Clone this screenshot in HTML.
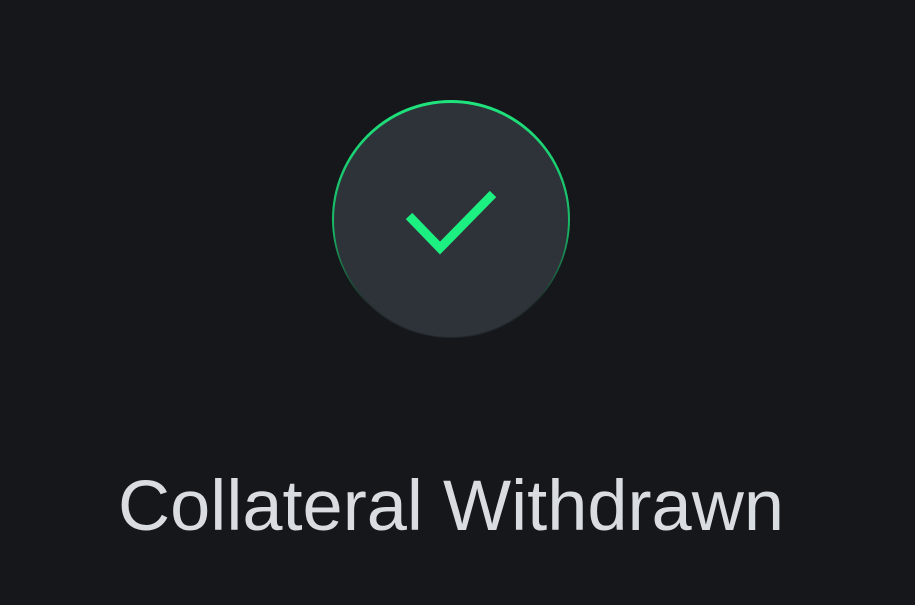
<!DOCTYPE html>
<html><head><style>
html,body{margin:0;padding:0;background:#15171b;width:915px;height:605px;overflow:hidden}
</style></head><body>
<svg width="915" height="605" viewBox="0 0 915 605" xmlns="http://www.w3.org/2000/svg">
<defs>
<linearGradient id="g" x1="0" y1="0" x2="0" y2="1">
<stop offset="0" stop-color="#1fe57d"/>
<stop offset="0.55" stop-color="#17b565"/>
<stop offset="0.85" stop-color="#1e2a28"/>
<stop offset="1" stop-color="#22262c"/>
</linearGradient>
</defs>
<rect width="915" height="605" fill="#15171b"/>
<circle cx="451" cy="219" r="119" fill="url(#g)"/>
<circle cx="451" cy="220" r="117" fill="#2e333a"/>
<polyline points="409,216 440,248 493,194" fill="none" stroke="#1cf081" stroke-width="9" stroke-linecap="butt" stroke-linejoin="miter"/>
<text x="118" y="530" font-family="Liberation Sans, sans-serif" font-size="71" fill="#d9dde2" textLength="666" lengthAdjust="spacingAndGlyphs">Collateral Withdrawn</text>
</svg>
</body></html>
